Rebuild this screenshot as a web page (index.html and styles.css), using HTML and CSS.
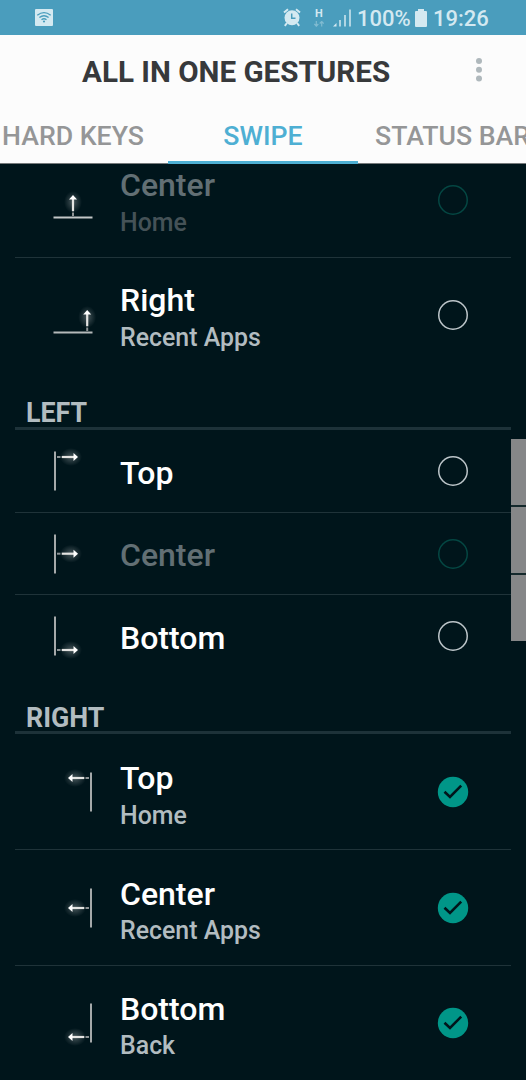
FILE: index.html
```html
<!DOCTYPE html>
<html lang="en">
<head>
<meta charset="utf-8">
<title>All in one gestures</title>
<link rel="stylesheet" href="styles.css">
</head>
<body>
<svg class="defs" width="0" height="0" aria-hidden="true">
  <defs>
    <radialGradient id="glow"><stop offset="0" stop-color="#fff" stop-opacity=".28"/><stop offset=".55" stop-color="#fff" stop-opacity=".12"/><stop offset="1" stop-color="#fff" stop-opacity="0"/></radialGradient>
    <g id="arrow">
      <ellipse cx="18" cy="0" rx="11" ry="9" fill="url(#glow)"/>
      <path d="M4 0H7.5" stroke="#8d9395" stroke-width="2"/>
      <path d="M8.700 0H22" stroke="#e4e4e2" stroke-width="2.200"/>
      <path d="M20.500 -4L25 0L20.500 4Z" fill="#fff"/>
    </g>
    <g id="check"><circle cx="16" cy="16" r="15.200" fill="#009688"/><path d="M7.500 15.700L13 21L24.200 9.700" fill="none" stroke="#00151b" stroke-width="2.600"/></g>
  </defs>
</svg>
<div class="screen">
  <div class="status">
    <svg class="wifi" width="18" height="17" viewBox="0 0 18 17"><rect width="18" height="17" rx="1" fill="#d4e9f1"/><g fill="none" stroke="#4a9dbd" stroke-width="1.400"><path d="M2.300 6.300Q9 1 15.700 6.300M4.400 8.500Q9 5 13.600 8.500M6.500 10.700Q9 8.800 11.500 10.700"/></g><circle cx="9" cy="12.500" r="1.100" fill="#4a9dbd"/></svg>
    <svg class="alarm" width="18" height="19" viewBox="0 0 18 19"><g stroke="#d4e9f1" fill="none" stroke-width="2"><path d="M1 4.500L5 1.200M17 4.500L13 1.200M4 15L1.800 17.800M14 15L16.200 17.800"/></g><circle cx="9" cy="9.700" r="7.500" fill="#d4e9f1"/><path d="M8.700 5.500V10.300H12.500" fill="none" stroke="#4a9dbd" stroke-width="1.500"/></svg>
    <div class="data"><span>H</span><svg width="10" height="6" viewBox="0 0 10 6"><path d="M2.300 0V4.500M.3 3L2.300 5.200L4.300 3M7.700 5.500V1M5.700 2.500L7.700.5L9.700 2.500" stroke="#80bbd1" fill="none" stroke-width="1.200"/></svg></div>
    <svg class="signal" width="18" height="18" viewBox="0 0 18 18"><path d="M0 17.500L3.500 14V17.500Z" fill="#d4e9f1"/><path d="M7 17.500V11M12 17.500V6M17 17.500V0.500" stroke="#c3e0ea" stroke-width="1.700"/></svg>
    <span class="pct">100%</span>
    <svg class="battery" width="12" height="18" viewBox="0 0 12 18"><path d="M3 0H9V2H11Q12 2 12 3V17Q12 18 11 18H1Q0 18 0 17V3Q0 2 1 2H3Z" fill="#d4e9f1"/></svg>
    <span class="time">19:26</span>
  </div>
  <header class="bar">
    <h1>ALL IN ONE GESTURES</h1>
    <svg class="more" width="6" height="24" viewBox="0 0 6 24"><g fill="#afb8bc"><circle cx="3" cy="3" r="3"/><circle cx="3" cy="11.800" r="3"/><circle cx="3" cy="20.500" r="3"/></g></svg>
  </header>
  <nav class="tabs">
    <div class="tab tab-keys">HARD KEYS</div>
    <div class="tab active">SWIPE</div>
    <div class="tab tab-status">STATUS BAR</div>
  </nav>
  <main class="content">
    <div class="list">
      <section>
        <div class="row tall off">
          <svg class="gesture" viewBox="0 0 40 40"><path d="M.5 37.500H39.500" stroke="#c3c7c8" stroke-width="2"/><use href="#arrow" transform="translate(20 40) rotate(-90)"/></svg>
          <div class="text"><div class="name">Center</div><div class="sub">Home</div></div><i class="ring"></i>
        </div>
        <div class="row tall">
          <svg class="gesture" viewBox="0 0 40 40"><path d="M.5 37.500H39.500" stroke="#b4b9ba" stroke-width="2"/><use href="#arrow" transform="translate(34.200 40) rotate(-90)"/></svg>
          <div class="text"><div class="name">Right</div><div class="sub">Recent Apps</div></div><i class="ring"></i>
        </div>
      </section>
      <section>
        <h2>LEFT</h2>
        <div class="row">
          <svg class="gesture" viewBox="0 0 40 40"><path d="M2 .5V39.500" stroke="#a5a9aa" stroke-width="2"/><use href="#arrow" y="6"/></svg>
          <div class="text"><div class="name">Top</div></div><i class="ring"></i>
        </div>
        <div class="row off">
          <svg class="gesture" viewBox="0 0 40 40"><path d="M2 .5V39.500" stroke="#a5a9aa" stroke-width="2"/><use href="#arrow" y="19.700"/></svg>
          <div class="text"><div class="name">Center</div></div><i class="ring"></i>
        </div>
        <div class="row">
          <svg class="gesture" viewBox="0 0 40 40"><path d="M2 .5V39.500" stroke="#a5a9aa" stroke-width="2"/><use href="#arrow" y="34"/></svg>
          <div class="text"><div class="name">Bottom</div></div><i class="ring"></i>
        </div>
      </section>
      <section class="lower">
        <h2>RIGHT</h2>
        <div class="row tall">
          <svg class="gesture" viewBox="0 0 40 40"><path d="M38 .5V39.500" stroke="#a5a9aa" stroke-width="2"/><use href="#arrow" transform="translate(40 6) scale(-1 1)"/></svg>
          <div class="text"><div class="name">Top</div><div class="sub">Home</div></div><svg class="mark" viewBox="0 0 32 32"><use href="#check"/></svg>
        </div>
        <div class="row tall">
          <svg class="gesture" viewBox="0 0 40 40"><path d="M38 .5V39.500" stroke="#a5a9aa" stroke-width="2"/><use href="#arrow" transform="translate(40 20) scale(-1 1)"/></svg>
          <div class="text"><div class="name">Center</div><div class="sub">Recent Apps</div></div><svg class="mark" viewBox="0 0 32 32"><use href="#check"/></svg>
        </div>
        <div class="row tall">
          <svg class="gesture" viewBox="0 0 40 40"><path d="M38 .5V39.500" stroke="#a5a9aa" stroke-width="2"/><use href="#arrow" transform="translate(40 34) scale(-1 1)"/></svg>
          <div class="text"><div class="name">Bottom</div><div class="sub">Back</div></div><svg class="mark" viewBox="0 0 32 32"><use href="#check"/></svg>
        </div>
      </section>
    </div>
  </main>
  <div class="edge"><i></i><i></i><i></i></div>
</div>
</body>
</html>
```
FILE: styles.css
```css
* { box-sizing: border-box; }
body { margin: 0; font-family: Roboto, "Liberation Sans", sans-serif; font-weight: 500; }
.defs { display: block; height: 0; }
.screen { position: relative; width: 526px; height: 1080px; overflow: hidden; background: #00151b; display: flex; flex-direction: column; }
.status { flex: none; height: 35px; background: #4a9dbd; color: #d4e9f1; display: flex; align-items: center; padding-left: 35px; font-size: 22px; white-space: nowrap; }
.status svg { flex: none; }
.alarm { margin-left: 230px; }
.data { width: 12px; height: 19px; margin-left: 12px; display: flex; flex-direction: column; align-items: center; gap: 2px; font-size: 11px; line-height: 11px; font-weight: 700; }
.signal { margin-left: 8px; }
.pct { width: 54px; margin-left: 6px; padding-top: 2px; }
.battery { margin-left: 4px; }
.time { margin-left: 6px; padding-top: 2px; }
.bar { flex: none; height: 73px; background: #fcfcfc; display: flex; align-items: center; padding-left: 82px; }
h1 { margin: 0; width: 310px; font-size: 29.600px; line-height: 36px; font-weight: 700; color: #37393b; white-space: nowrap; }
.more { margin: -3px 0 0 84px; }
.tabs { flex: none; height: 56px; margin-left: -22px; width: 548px; background: #fcfcfc; display: flex; border-bottom: 1px solid #75797b; }
.tab { flex: none; width: 190px; height: 55px; text-align: center; font-size: 26.700px; line-height: 56px; color: #959697; white-space: nowrap; }
.tab.active { color: #4eafd3; height: 56px; border-bottom: 3px solid #4eafd3; }
.tab-status { text-align: left; padding-left: 17px; }
.content { flex: 1; min-height: 0; overflow: hidden; }
.list { margin: -22px 15px 0; }
.row { height: 82.200px; display: flex; align-items: center; padding-left: 38px; }
.row + .row { border-top: 1px solid #1f3339; }
.row.tall { height: 115.300px; }
h2 + .tall { padding-top: 1px; }
.gesture { width: 40px; height: 40px; flex: none; overflow: visible; }
.text { width: 291px; margin-left: 27px; flex: none; white-space: nowrap; }
.name { font-size: 32px; line-height: 38px; color: #fff; padding-top: 3px; }
.tall .name { padding-top: 4px; }
.sub { font-size: 24.900px; line-height: 30px; color: #b2bcc0; padding-top: 4px; }
.lower .name { padding-top: 5.500px; }
.lower .sub { padding-top: 3.500px; }
.ring { flex: none; width: 30px; height: 30px; margin-left: 27px; box-shadow: inset 0 0 0 1.500px #bdc6ca; border-radius: 50%; }
.mark { flex: none; width: 32px; height: 32px; margin-left: 26px; }
.off .name { color: #626f74; }
.off .sub { color: #455257; }
.off .ring { box-shadow: inset 0 0 0 1.500px #044743; }
h2 { margin: 0; height: 57.500px; padding: 23.500px 0 0 11px; font-size: 26.800px; line-height: 34px; font-weight: 700; color: #b2bcc0; border-bottom: 3px solid #1d3239; }
.lower h2 { padding-top: 24.200px; }
.edge { position: absolute; right: 0; top: 439px; width: 15px; height: 202px; display: flex; flex-direction: column; gap: 2px; background: #14292c; }
.edge i { flex: 1; background: #868788; }
```
